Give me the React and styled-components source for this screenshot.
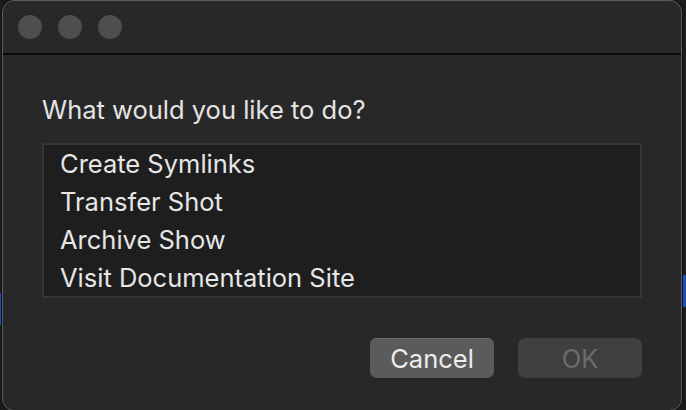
import React from "react";
import styled, { createGlobalStyle } from "styled-components";

const Global = createGlobalStyle`
  html, body { margin: 0; padding: 0; background: #1c1c1c; }
  body { width: 686px; height: 410px; overflow: hidden; font-family: Inter, "Noto Sans", "Liberation Sans", sans-serif; }
  #root { width: 686px; height: 410px; }
`;

const Desktop = styled.div`
  position: relative;
  width: 686px;
  height: 410px;
  overflow: hidden;
  background: #1c1c1c;
`;

const Strip = styled.div`
  position: absolute;
  width: 4px;
  background: ${(p) => p.$color};
`;

const Window = styled.div`
  position: absolute;
  left: 2px;
  top: 0;
  width: 680px;
  height: 411px;
  box-sizing: border-box;
  background: #282828;
  border-radius: 12px;
  border: 1px solid #5c5c5c;
  box-shadow: 0 0 0 1px #111;
  display: flex;
  flex-direction: column;
  overflow: hidden;
`;

const TitleBar = styled.div`
  height: 52px;
  display: flex;
  align-items: center;
  gap: 16px;
  padding: 0 0 0 15px;
  border-bottom: 2px solid #0a0a0a;
  flex-shrink: 0;
`;

const Light = styled.span`
  width: 24px;
  height: 24px;
  border-radius: 50%;
  background: #4e4e4e;
`;

const Content = styled.div`
  display: flex;
  flex-direction: column;
  padding: 41px 39px 0 39px;
`;

const Prompt = styled.div`
  color: #e4e4e4;
  font-size: 25.5px;
  line-height: 28px;
`;

const ListBox = styled.div`
  margin-top: 19px;
  height: 155px;
  box-sizing: border-box;
  border: 2px solid #353535;
  background: #1e1e1e;
  padding: 0 0 0 16px;
  display: flex;
  flex-direction: column;
`;

const Item = styled.div`
  color: #e6e6e6;
  font-size: 25.5px;
  height: 38px;
  line-height: 38px;
`;

const Buttons = styled.div`
  display: flex;
  justify-content: flex-end;
  gap: 24px;
  margin-top: 40px;
`;

const Button = styled.button`
  width: 124px;
  height: 40px;
  border: none;
  border-radius: 7px;
  font-family: inherit;
  font-size: 25.5px;
  padding: 0;
  background: ${(p) => (p.$disabled ? "#3f3f3f" : "#5b5b5b")};
  color: ${(p) => (p.$disabled ? "#6c6c6c" : "#ececec")};
  box-shadow: ${(p) => (p.$disabled ? "none" : "inset 0 1px 0 #6a6a6a")};
`;

export default function App() {
  return (
    <Desktop>
      <Global />
      <Strip $color="#1a4fb8" style={{ left: 0, top: 293, height: 32 }} />
      <Strip $color="#1a4fb8" style={{ right: 0, top: 275, height: 32 }} />
      <Window>
        <TitleBar>
          <Light />
          <Light />
          <Light />
        </TitleBar>
        <Content>
          <Prompt>What would you like to do?</Prompt>
          <ListBox>
            <Item>Create Symlinks</Item>
            <Item>Transfer Shot</Item>
            <Item>Archive Show</Item>
            <Item>Visit Documentation Site</Item>
          </ListBox>
          <Buttons>
            <Button>Cancel</Button>
            <Button $disabled>OK</Button>
          </Buttons>
        </Content>
      </Window>
    </Desktop>
  );
}
